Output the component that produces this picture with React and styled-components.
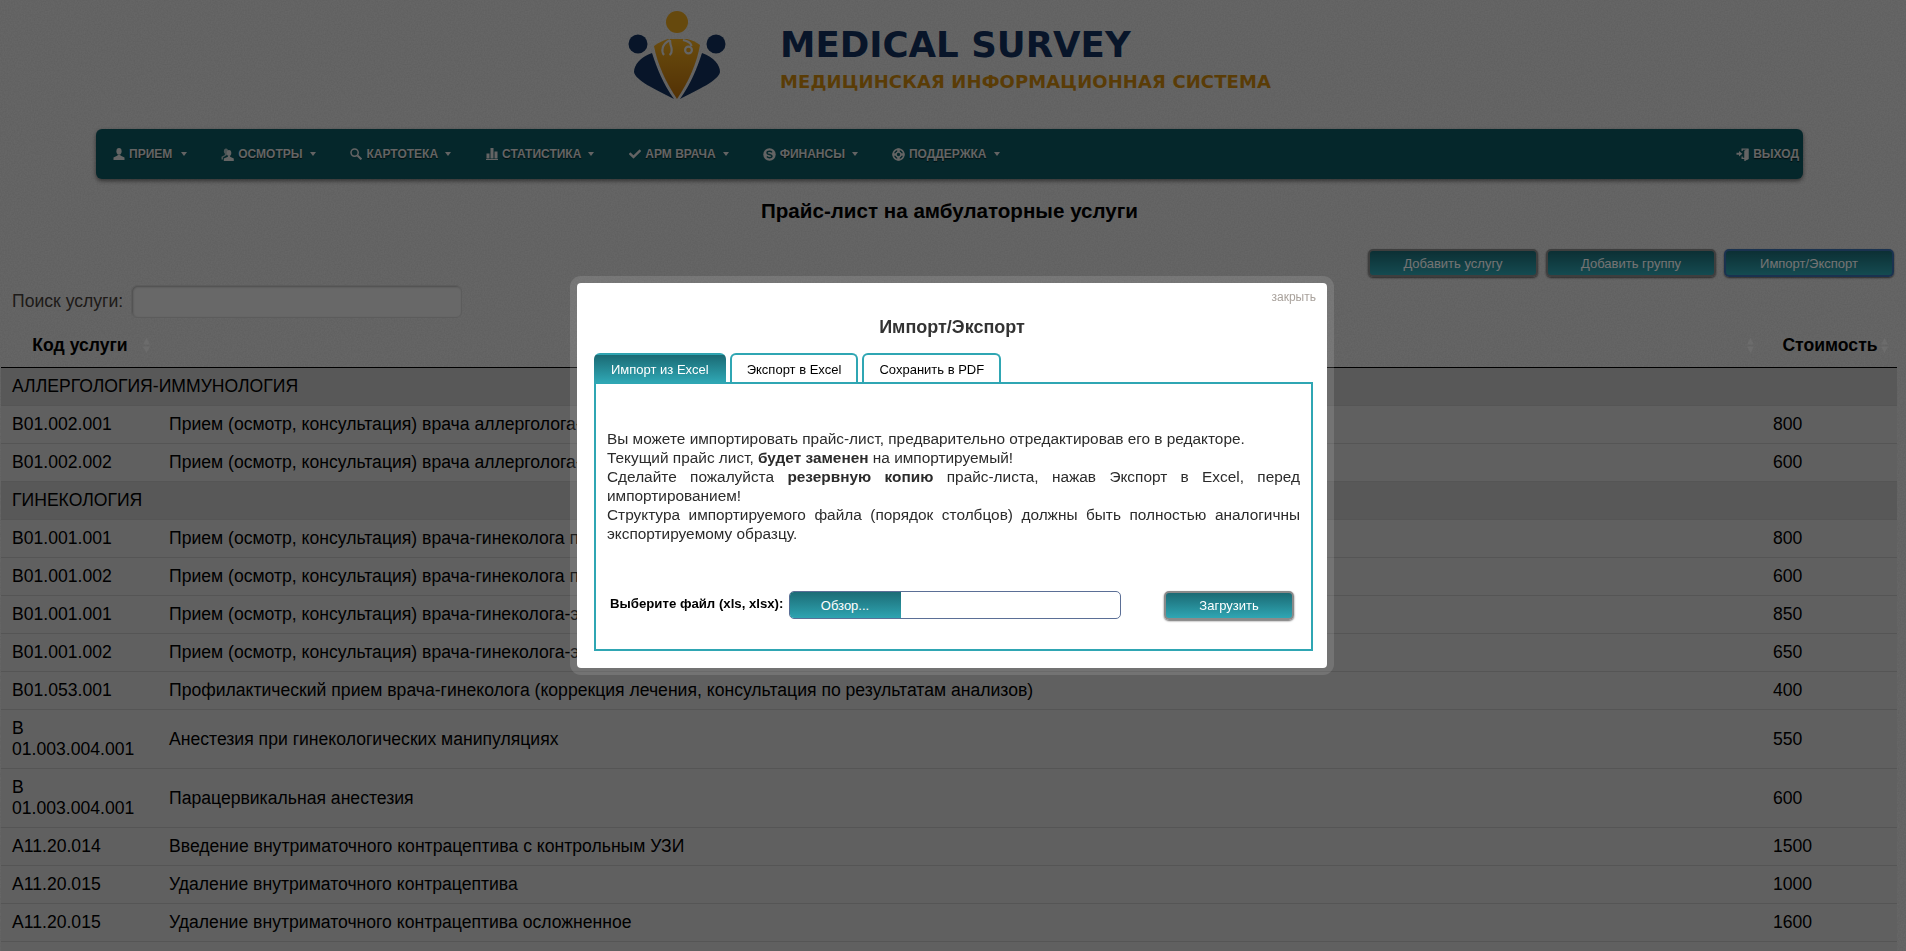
import React from 'react';
import styled, { createGlobalStyle } from 'styled-components';
import { FaCheck } from 'react-icons/fa';

const paper = "data:image/svg+xml,%3Csvg xmlns='http://www.w3.org/2000/svg' width='240' height='240'%3E%3Cfilter id='n'%3E%3CfeTurbulence type='fractalNoise' baseFrequency='.7' numOctaves='2'/%3E%3CfeColorMatrix values='0 0 0 0 0 0 0 0 0 0 0 0 0 0 0 0 0 0 .1 0'/%3E%3C/filter%3E%3Crect width='240' height='240' filter='url(%23n)'/%3E%3C/svg%3E";

const GlobalStyle = createGlobalStyle`
  html, body {
    margin: 0;
    height: 951px;
    overflow: hidden;
    background: #e8e8e8 url("${paper}");
    font-family: "Liberation Sans", Arial, sans-serif;
  }
`;

const Page = styled.div`
  width: 1899px;
`;

const Header = styled.header`
  display: flex;
  align-items: flex-start;
  gap: 40px;
  height: 129px;
  box-sizing: border-box;
  padding: 5px 0 0 620px;
`;

const LogoText = styled.div`
  display: flex;
  flex-direction: column;
  padding-top: 21px;
  font-family: "DejaVu Sans", sans-serif;
  font-weight: bold;
`;

const LogoTitle = styled.div`
  font-size: 35.6px;
  line-height: 38px;
  color: #12305c;
  white-space: nowrap;
`;

const LogoSubtitle = styled.div`
  font-size: 18px;
  line-height: 22px;
  margin-top: 7px;
  letter-spacing: 0.1px;
  color: #c8860f;
  white-space: nowrap;
`;

const Nav = styled.nav`
  display: flex;
  align-items: center;
  height: 50px;
  margin: 0 96px;
  padding-left: 1px;
  background: #0d5760;
  border-radius: 6px;
  box-shadow: 0 2px 4px rgba(0, 0, 0, 0.5);
`;

const NavItem = styled.a`
  display: flex;
  align-items: center;
  height: 100%;
  padding: 0 ${({ $tight }) => ($tight ? 4 : 19)}px 0 15px;
  margin-left: ${({ $right }) => ($right ? 'auto' : 0)};
  font-size: 12px;
  font-weight: bold;
  color: #ddd;
  text-shadow: 0 1px 1px rgba(0, 0, 0, 0.7);
  white-space: nowrap;
`;

const NavIcon = styled.span`
  display: flex;
  justify-content: center;
  width: 13px;
  margin-right: 4px;
  font-size: 12px;
`;

const Caret = styled.span`
  width: 0;
  height: 0;
  margin-left: ${({ $wide }) => ($wide ? 9 : 7)}px;
  border-left: 3.5px solid transparent;
  border-right: 3.5px solid transparent;
  border-top: 4px solid #ddd;
`;

const PageTitle = styled.h1`
  margin: 20px 0 26px;
  font-size: 20.6px;
  line-height: 24px;
  font-weight: bold;
  text-align: center;
  color: #000;
`;

const Toolbar = styled.div`
  display: flex;
  justify-content: flex-end;
  gap: 8px;
  padding-right: 5px;
`;

const ActionButton = styled.button`
  width: 170px;
  height: 28px;
  padding: 0;
  font-family: inherit;
  font-size: 13px;
  color: #fff;
  background: linear-gradient(#1b6a74, #2fa6b3);
  border: 2px solid ${({ $focused }) => ($focused ? '#3a6fb0' : '#8a8a8a')};
  border-radius: 5px;
  box-shadow: 0 1px 2px rgba(0, 0, 0, 0.6);
`;

const SearchRow = styled.div`
  display: flex;
  align-items: center;
  gap: 8px;
  margin-top: 8px;
  padding-left: 12px;
`;

const SearchLabel = styled.label`
  font-size: 17.6px;
  color: #443c38;
`;

const SearchInput = styled.input`
  width: 331px;
  height: 33px;
  box-sizing: border-box;
  background: #e6e6e6;
  border: 1px solid #ccc;
  border-radius: 6px;
  box-shadow: inset 1px 1px 2px rgba(0, 0, 0, 0.25);
`;

const PriceTable = styled.table`
  width: 1896px;
  margin: 9px 0 0 1px;
  table-layout: fixed;
  border-collapse: collapse;
  font-size: 17.6px;
  line-height: 21px;
  color: #000;
`;

const HeadCell = styled.th`
  position: relative;
  box-sizing: border-box;
  padding: 8px 10px 11px;
  width: ${({ $width }) => ($width ? `${$width}px` : 'auto')};
  text-align: center;
  font-weight: bold;
  border-bottom: 1px solid #000;
`;

const SortIcon = styled.svg`
  position: absolute;
  top: 11px;
  right: 8px;
  width: 9px;
  height: 15px;
  fill: #fff;
  opacity: 0.55;
`;

const GroupRow = styled.tr`
  background: #c4c4c4;
`;

const GroupCell = styled.td`
  height: 21px;
  padding: 8px 10px 8px 11px;
  border-bottom: 1px solid #bdbdbd;
`;

const Row = styled.tr`
  background: #d5d5d5;
`;

const Cell = styled.td`
  padding: 8px 10px;
  border-bottom: 1px solid #bdbdbd;
  vertical-align: middle;
`;

const CodeCell = styled(Cell)`
  padding-left: 11px;
`;

const Overlay = styled.div`
  position: fixed;
  inset: 0;
  display: flex;
  align-items: center;
  justify-content: center;
  padding-right: 2px;
  background: rgba(0, 0, 0, 0.55);
`;

const Modal = styled.div`
  width: 750px;
  height: 385px;
  border: 7px solid rgba(255, 255, 255, 0.12);
  border-radius: 11px;
  background: #fff;
  background-clip: padding-box;
`;

const CloseLink = styled.div`
  padding: 7px 11px 0;
  font-size: 12px;
  line-height: 14px;
  text-align: right;
  color: #a9a29c;
`;

const ModalTitle = styled.h2`
  margin: 12px 0 15px;
  font-size: 18px;
  line-height: 22px;
  font-weight: bold;
  text-align: center;
  color: #333;
`;

const ModalBody = styled.div`
  padding: 0 14px 0 17px;
`;

const Tabs = styled.div`
  display: flex;
  gap: 4px;
`;

const Tab = styled.div`
  display: flex;
  align-items: center;
  height: 29px;
  box-sizing: border-box;
  padding: 2px 15px 0;
  font-size: 13px;
  color: ${({ $active }) => ($active ? '#fff' : '#000')};
  background: ${({ $active }) => ($active ? 'linear-gradient(#1b6a74, #2fa6b3)' : '#fff')};
  border: 2px solid ${({ $active }) => ($active ? 'transparent' : '#2fa6b3')};
  border-bottom: 0;
  border-radius: 6px 6px 0 0;
`;

const TabPanel = styled.div`
  height: 269px;
  box-sizing: border-box;
  padding: 45px 11px 0;
  border: 2px solid #2fa6b3;
`;

const Notice = styled.p`
  margin: 0;
  font-size: 15.4px;
  line-height: 19px;
  text-align: justify;
  color: #2b2b2b;
`;

const UploadRow = styled.div`
  display: flex;
  align-items: flex-start;
  margin-top: 48px;
  padding-left: 3px;
`;

const FileLabel = styled.span`
  width: 179px;
  font-size: 13.2px;
  line-height: 26px;
  font-weight: bold;
  color: #000;
  white-space: nowrap;
`;

const FileField = styled.div`
  display: flex;
  width: 332px;
  height: 28px;
  box-sizing: border-box;
  border: 1px solid #5b6f96;
  border-radius: 5px;
  overflow: hidden;
`;

const BrowseButton = styled.span`
  display: flex;
  align-items: center;
  justify-content: center;
  width: 112px;
  margin: -1px 0 -1px -1px;
  font-size: 13px;
  color: #fff;
  background: linear-gradient(#1b6a74, #2fa6b3);
`;

const UploadButton = styled.button`
  width: 130px;
  height: 29px;
  margin-left: 43px;
  padding: 0;
  font-family: inherit;
  font-size: 13px;
  color: #fff;
  background: linear-gradient(#1b6a74, #2fa6b3);
  border: 2px solid #8a8a8a;
  border-radius: 5px;
  box-shadow: 0 1px 2px rgba(0, 0, 0, 0.6);
`;

const Logo = () => (
  <svg width="120" height="100" viewBox="0 0 120 100">
    <defs>
      <linearGradient id="gold" x1="0" y1="0" x2="0" y2="1">
        <stop offset="0" stopColor="#eaa81f" />
        <stop offset="1" stopColor="#b86e0c" />
      </linearGradient>
    </defs>
    <circle cx="57" cy="17" r="11" fill="#e3a21d" />
    <circle cx="18" cy="39" r="9.5" fill="#12305c" />
    <circle cx="96" cy="39" r="9.5" fill="#12305c" />
    <path d="M32 48C20 52 14 60 14 67C15 75 36 85 54 94C43 79 37 63 32 48Z" fill="#12305c" />
    <path d="M82 48C94 52 100 60 100 67C99 75 78 85 60 94C71 79 77 63 82 48Z" fill="#12305c" />
    <path d="M34 41C40 37 44 35 48 34L67 34C72 35 76 37 80 40C77 58 68 78 57 94C46 78 37 58 34 41Z" fill="url(#gold)" />
    <path d="M50 35C46 37 43 40 42.5 44C42 46 43 49 44 50M50 35C50 38 50.5 40 51.5 43C52 46 51 49 49.5 50" fill="none" stroke="#ddd" strokeWidth="2.2" />
    <path d="M63 35C67 36 71 37 71.5 41" fill="none" stroke="#ddd" strokeWidth="2.2" />
    <circle cx="68.5" cy="45" r="3.4" fill="none" stroke="#ddd" strokeWidth="2.2" />
  </svg>
);

const UserIcon = () => (
  <svg width="12" height="12" viewBox="0 0 12 12" fill="currentColor">
    <ellipse cx="6" cy="3.2" rx="2.6" ry="3.2" />
    <path d="M4.6 6.6H7.4V7.6L11.5 9.6V12H0.5V9.6L4.6 7.6Z" />
  </svg>
);

const GroupIcon = () => (
  <svg width="13" height="13" viewBox="0 0 13 13" fill="currentColor">
    <ellipse cx="5" cy="3.2" rx="2.1" ry="2.8" opacity="0.75" />
    <path d="M3.8 6H6V7L2 9.5V11.5H0.5V8.8L3.8 7Z" opacity="0.75" />
    <ellipse cx="8" cy="5" rx="2.3" ry="2.9" />
    <path d="M6.9 7.8H9.1V8.7L12.8 10.4V13H2.8V10.4L6.9 8.7Z" />
  </svg>
);

const SkypeIcon = () => (
  <svg width="13" height="13" viewBox="0 0 13 13">
    <circle cx="6.5" cy="6.5" r="6.2" fill="currentColor" />
    <path d="M9 4.4C8.4 3.6 7.5 3.3 6.5 3.3C5.1 3.3 4 3.9 4 4.9C4 7 9 6 9 8.1C9 9.1 7.9 9.7 6.5 9.7C5.4 9.7 4.5 9.3 3.9 8.5" fill="none" stroke="#0d5760" strokeWidth="1.4" />
  </svg>
);

const LifeRingIcon = () => (
  <svg width="13" height="13" viewBox="0 0 13 13" fill="none" stroke="currentColor">
    <circle cx="6.5" cy="6.5" r="5.4" strokeWidth="1.6" />
    <circle cx="6.5" cy="6.5" r="2.4" strokeWidth="1.4" />
    <path d="M6.5 0.5V4M6.5 9V12.5M0.5 6.5H4M9 6.5H12.5" strokeWidth="2.6" />
  </svg>
);

const StatsIcon = () => (
  <svg width="12" height="12" viewBox="0 0 12 12" fill="currentColor">
    <rect x="0" y="11" width="12" height="1" />
    <rect x="0.5" y="5.5" width="3" height="5" />
    <rect x="4.5" y="0" width="3" height="10.5" />
    <rect x="8.5" y="3.5" width="3" height="7" />
  </svg>
);

const SearchIcon = () => (
  <svg width="12" height="12" viewBox="0 0 12 12" fill="none" stroke="currentColor">
    <circle cx="4.6" cy="4.6" r="3.6" strokeWidth="1.5" />
    <path d="M7.5 7.5L11.4 11.4" strokeWidth="2" />
  </svg>
);

const ExitIcon = () => (
  <svg width="13" height="13" viewBox="0 0 13 13" fill="currentColor">
    <path d="M5.5 0.5H12.5V11L8.5 13V11H5.5V8.5H6.8V9.8H8.5V2.8L10.8 1.7H6.8V3H5.5Z" />
    <path d="M0.5 4.7H3V3L6.3 5.7L3 8.4V6.7H0.5Z" />
    <path d="M8.5 2.8L12.5 0.8V11L8.5 13Z" />
  </svg>
);

const SortArrows = () => (
  <SortIcon viewBox="0 0 9 15">
    <path d="M4.5 0L8 6.5H1Z" />
    <path d="M4.5 15L8 8.5H1Z" />
  </SortIcon>
);

const menu = [
  { label: 'ПРИЕМ', icon: <UserIcon />, wideCaret: true },
  { label: 'ОСМОТРЫ', icon: <GroupIcon /> },
  { label: 'КАРТОТЕКА', icon: <SearchIcon /> },
  { label: 'СТАТИСТИКА', icon: <StatsIcon /> },
  { label: 'АРМ ВРАЧА', icon: <FaCheck /> },
  { label: 'ФИНАНСЫ', icon: <SkypeIcon /> },
  { label: 'ПОДДЕРЖКА', icon: <LifeRingIcon /> },
];

const rows = [
  { group: 'АЛЛЕРГОЛОГИЯ-ИММУНОЛОГИЯ' },
  { code: 'B01.002.001', name: 'Прием (осмотр, консультация) врача аллерголога-иммунолога первичный', price: 800 },
  { code: 'B01.002.002', name: 'Прием (осмотр, консультация) врача аллерголога-иммунолога повторный', price: 600 },
  { group: 'ГИНЕКОЛОГИЯ' },
  { code: 'B01.001.001', name: 'Прием (осмотр, консультация) врача-гинеколога первичный', price: 800 },
  { code: 'B01.001.002', name: 'Прием (осмотр, консультация) врача-гинеколога повторный', price: 600 },
  { code: 'B01.001.001', name: 'Прием (осмотр, консультация) врача-гинеколога-эндокринолога первичный', price: 850 },
  { code: 'B01.001.002', name: 'Прием (осмотр, консультация) врача-гинеколога-эндокринолога повторный', price: 650 },
  { code: 'B01.053.001', name: 'Профилактический прием врача-гинеколога (коррекция лечения, консультация по результатам анализов)', price: 400 },
  { code: 'B 01.003.004.001', name: 'Анестезия при гинекологических манипуляциях', price: 550 },
  { code: 'B 01.003.004.001', name: 'Парацервикальная анестезия', price: 600 },
  { code: 'A11.20.014', name: 'Введение внутриматочного контрацептива с контрольным УЗИ', price: 1500 },
  { code: 'A11.20.015', name: 'Удаление внутриматочного контрацептива', price: 1000 },
  { code: 'A11.20.015', name: 'Удаление внутриматочного контрацептива осложненное', price: 1600 },
  { code: '\u00a0', name: '\u00a0', price: '\u00a0' },
];

export default function App() {
  return (
    <>
      <GlobalStyle />
      <Page>
        <Header>
          <Logo />
          <LogoText>
            <LogoTitle>MEDICAL SURVEY</LogoTitle>
            <LogoSubtitle>МЕДИЦИНСКАЯ ИНФОРМАЦИОННАЯ СИСТЕМА</LogoSubtitle>
          </LogoText>
        </Header>
        <Nav>
          {menu.map((item) => (
            <NavItem key={item.label}>
              <NavIcon>{item.icon}</NavIcon>
              {item.label}
              <Caret $wide={item.wideCaret} />
            </NavItem>
          ))}
          <NavItem $right $tight>
            <NavIcon><ExitIcon /></NavIcon>
            ВЫХОД
          </NavItem>
        </Nav>
        <PageTitle>Прайс-лист на амбулаторные услуги</PageTitle>
        <Toolbar>
          <ActionButton>Добавить услугу</ActionButton>
          <ActionButton>Добавить группу</ActionButton>
          <ActionButton $focused>Импорт/Экспорт</ActionButton>
        </Toolbar>
        <SearchRow>
          <SearchLabel>Поиск услуги:</SearchLabel>
          <SearchInput />
        </SearchRow>
        <PriceTable>
          <thead>
            <tr>
              <HeadCell $width={158}>Код услуги<SortArrows /></HeadCell>
              <HeadCell>Наименование услуги<SortArrows /></HeadCell>
              <HeadCell $width={134}>Стоимость<SortArrows /></HeadCell>
            </tr>
          </thead>
          <tbody>
            {rows.map((row, i) =>
              row.group ? (
                <GroupRow key={i}>
                  <GroupCell colSpan={3}>{row.group}</GroupCell>
                </GroupRow>
              ) : (
                <Row key={i}>
                  <CodeCell>{row.code}</CodeCell>
                  <Cell>{row.name}</Cell>
                  <Cell>{row.price}</Cell>
                </Row>
              )
            )}
          </tbody>
        </PriceTable>
      </Page>
      <Overlay>
        <Modal>
          <CloseLink>закрыть</CloseLink>
          <ModalTitle>Импорт/Экспорт</ModalTitle>
          <ModalBody>
            <Tabs>
              <Tab $active>Импорт из Excel</Tab>
              <Tab>Экспорт в Excel</Tab>
              <Tab>Сохранить в PDF</Tab>
            </Tabs>
            <TabPanel>
              <Notice>
                Вы можете импортировать прайс-лист, предварительно отредактировав его в редакторе.
                <br />
                Текущий прайс лист, <b>будет заменен</b> на импортируемый!
                <br />
                Сделайте пожалуйста <b>резервную копию</b> прайс-листа, нажав Экспорт в Excel, перед импортированием!
                <br />
                Структура импортируемого файла (порядок столбцов) должны быть полностью аналогичны экспортируемому образцу.
              </Notice>
              <UploadRow>
                <FileLabel>Выберите файл (xls, xlsx):</FileLabel>
                <FileField>
                  <BrowseButton>Обзор...</BrowseButton>
                </FileField>
                <UploadButton>Загрузить</UploadButton>
              </UploadRow>
            </TabPanel>
          </ModalBody>
        </Modal>
      </Overlay>
    </>
  );
}
